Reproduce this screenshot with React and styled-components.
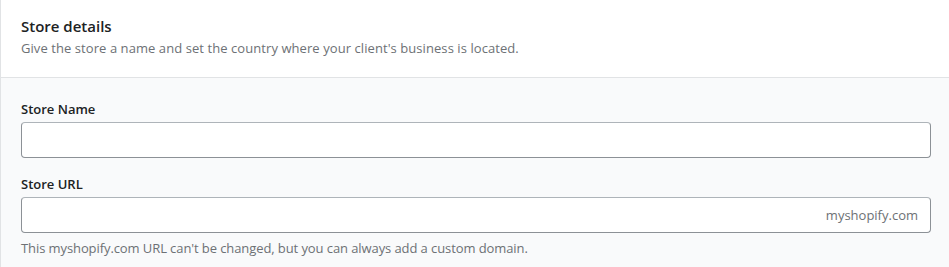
import React from "react";
import styled, { createGlobalStyle } from "styled-components";

const Global = createGlobalStyle`
  html, body { margin: 0; padding: 0; background: #ffffff; }
  body { font-family: "Open Sans", "Noto Sans", sans-serif; color: #202223; -webkit-font-smoothing: antialiased; }
  * { box-sizing: border-box; }
`;

const Card = styled.section`
  width: 949px;
  border-left: 1px solid #e1e3e5;
  background: #ffffff;
`;

const Header = styled.div`
  padding: 14px 18px 19px 20px;
  border-bottom: 1px solid #e1e3e5;
  display: flex;
  flex-direction: column;
`;

const Title = styled.h2`
  margin: 0;
  font-size: 15px;
  line-height: 24px;
  font-weight: 600;
  color: #202223;
`;

const Subtitle = styled.p`
  margin: 0;
  font-size: 13px;
  line-height: 20px;
  letter-spacing: 0.07px;
  color: #6d7175;
`;

const Body = styled.div`
  background: #f9fafb;
  padding: 21px 18px 16px 20px;
  display: flex;
  flex-direction: column;
  gap: 16px;
`;

const Field = styled.div`
  display: flex;
  flex-direction: column;
`;

const Label = styled.label`
  font-size: 13px;
  line-height: 20px;
  font-weight: 600;
  color: #202223;
  margin-bottom: 3px;
`;

const InputBox = styled.div`
  height: 36px;
  border: 1px solid #8c9196;
  border-top-color: #aeb4b9;
  border-radius: 4px;
  background: #ffffff;
  display: flex;
  align-items: center;
  padding: 0 12px;
`;

const Input = styled.input`
  flex: 1;
  border: 0;
  outline: none;
  background: transparent;
  font: inherit;
  font-size: 13px;
  color: #202223;
  min-width: 0;
`;

const Suffix = styled.span`
  font-size: 13px;
  color: #6d7175;
`;

const Help = styled.p`
  margin: 5px 0 0;
  font-size: 13px;
  line-height: 20px;
  letter-spacing: -0.09px;
  color: #6d7175;
`;

export default function App() {
  return (
    <>
      <Global />
      <Card>
        <Header>
          <Title>Store details</Title>
          <Subtitle>Give the store a name and set the country where your client's business is located.</Subtitle>
        </Header>
        <Body>
          <Field>
            <Label>Store Name</Label>
            <InputBox>
              <Input />
            </InputBox>
          </Field>
          <Field>
            <Label>Store URL</Label>
            <InputBox>
              <Input />
              <Suffix>myshopify.com</Suffix>
            </InputBox>
            <Help>This myshopify.com URL can't be changed, but you can always add a custom domain.</Help>
          </Field>
        </Body>
      </Card>
    </>
  );
}
